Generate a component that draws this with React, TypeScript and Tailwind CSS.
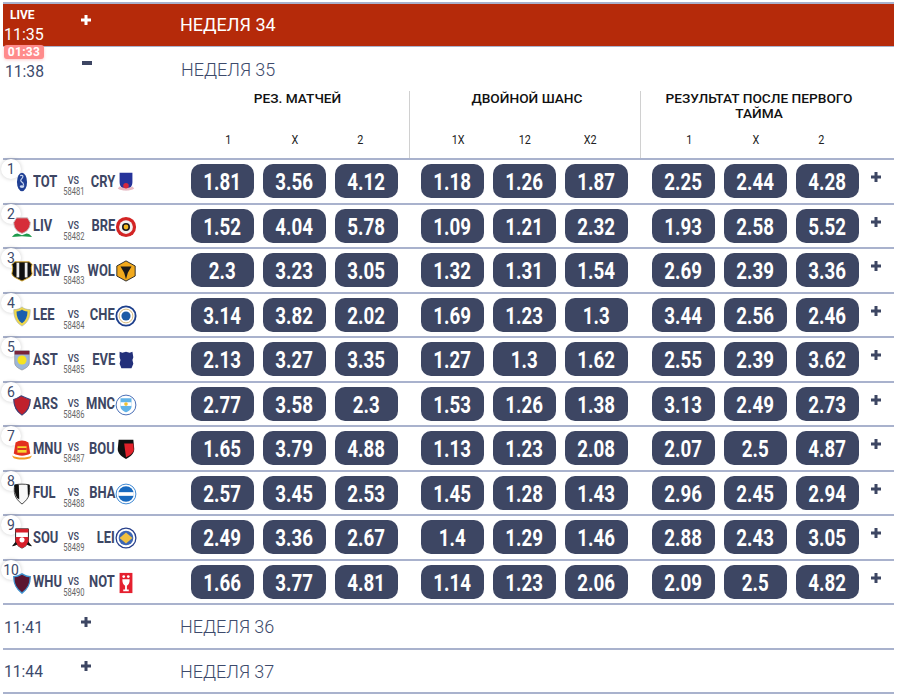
import React from "react";

const C = ({ children }: { children: React.ReactNode }) => (
  <svg viewBox="0 0 24 24" className="w-[22px] h-[22px] shrink-0">{children}</svg>
);

const crests: Record<string, React.ReactNode> = {
  TOT: <C><ellipse cx="12" cy="12" rx="5.5" ry="10" fill="#1f3f94" /><path d="M10 5c3-1 4 1 2 3s-2 3 1 5l1 3" stroke="#c9d6ee" strokeWidth="1.3" fill="none" /><ellipse cx="12" cy="17" rx="2.5" ry="1.5" fill="#c9d6ee" /></C>,
  CRY: <C><path d="M5 2h14v10c0 5-3 7-7 9-4-2-7-4-7-9z" fill="#26339a" /><path d="M3 19c4 3 14 3 18 0l-2-2c-3 2-11 2-14 0z" fill="#e8b8c0" /><circle cx="12" cy="16" r="3" fill="#d8283c" /></C>,
  LIV: <C><path d="M6 2h12l3 5c0 7-4 10-9 12C7 17 3 14 3 7z" fill="#d62e3a" stroke="#c5c5c5" strokeWidth="1" /><path d="M1 23c2-3 4-4 6-4l5 2 5-2c2 0 4 1 6 4l-11-1z" fill="#1d9a4c" /></C>,
  BRE: <C><circle cx="12" cy="12" r="11" fill="#d32424" /><circle cx="12" cy="12" r="7.500" fill="#f2f2f2" /><circle cx="12" cy="12" r="4.400" fill="#1a1a1a" /><circle cx="12" cy="12" r="2.600" fill="#f2b71f" /></C>,
  NEW: <C><path d="M4 2h16l3 3c-2 4 0 8 0 10-1 4-6 5-11 8-5-3-10-4-11-8 0-2 2-6 0-10z" fill="#111" stroke="#d9a520" strokeWidth="1" /><rect x="6" y="3" width="3" height="16" fill="#eee" /><rect x="15" y="3" width="3" height="16" fill="#eee" /></C>,
  WOL: <C><path d="M12 1l10 5.500v11L12 23 2 17.500v-11z" fill="#f1a91d" stroke="#222" strokeWidth="1" /><path d="M6 7h12l-4 7-2 7-2-7z" fill="#1a1a1a" /></C>,
  LEE: <C><path d="M3 5c4 0 7-1 9-3 2 2 5 3 9 3 0 8-2 14-9 18C5 19 3 13 3 5z" fill="#f0d84a" stroke="#9ab" strokeWidth=".6" /><path d="M6 7c3 0 5-1 6-2 1 1 3 2 6 2 0 6-2 10-6 13-4-3-6-7-6-13z" fill="#1a5fae" /></C>,
  CHE: <C><circle cx="12" cy="12" r="10.500" fill="#fff" stroke="#1d3f8c" strokeWidth="2" /><circle cx="12" cy="12" r="7.500" fill="#fff" stroke="#c9a24d" strokeWidth=".8" /><circle cx="12" cy="12" r="5" fill="#1c5aa6" /></C>,
  AST: <C><path d="M4 2h16v13c0 4-4 6-8 8-4-2-8-4-8-8z" fill="#9cb6d8" stroke="#888" strokeWidth=".6" /><path d="M4 2h16v4H4z" fill="#7a2339" /><circle cx="12" cy="12" r="5" fill="#f6e31f" /></C>,
  EVE: <C><path d="M5 3l3 1 4-1 4 1 3-1 1 6-1 3 1 4-2 5H7l-2-5 1-4-1-3z" fill="#23307a" /></C>,
  ARS: <C><path d="M3 6c3-1 5-2 8-4 4 2 7 3 10 4 0 8-3 13-9 17C6 19 3 14 3 6z" fill="#c0202c" stroke="#38407a" strokeWidth="1.200" /></C>,
  MNC: <C><circle cx="12" cy="12" r="10.800" fill="#fff" stroke="#3a62b0" strokeWidth="1" /><path d="M6 4.500h12v9c0 3-3 5-6 6.500-3-1.500-6-3.500-6-6.500z" fill="#62b4e8" /><rect x="6" y="9" width="12" height="4" fill="#fff" /><circle cx="12" cy="11" r="2" fill="#f2c230" /></C>,
  MNU: <C><path d="M5 5c4-3 10-3 14 0l2 12c-5 3-13 3-18 0z" fill="#e3301f" /><rect x="7" y="9" width="10" height="7" fill="#f7d52e" /><rect x="7" y="11" width="10" height="2" fill="#d62a1f" /><path d="M1 19c6 3 16 3 22 0l-2 3c-5 2-13 2-18 0z" fill="#f39a1f" /></C>,
  BOU: <C><path d="M4 2h16l1 10c0 5-4 8-9 11-5-3-9-6-9-11z" fill="#111" /><path d="M10 6h10l.5 7c-.5 3-4 6-8.500 8z" fill="#e2222a" /></C>,
  FUL: <C><path d="M4 2c5-1 11-1 16 0 1 8 1 14-8 21C3 16 3 10 4 2z" fill="#f8f8f8" stroke="#222" strokeWidth=".9" /><path d="M4 2c2-.4 3-.5 4.500-.5L9 18l-2.500-2C4 12 3.500 8 4 2z" fill="#111" /><path d="M18 2l2 .2c.5 5 .5 9-1.500 13z" fill="#111" /></C>,
  BHA: <C><circle cx="12" cy="12" r="10.800" fill="#fff" stroke="#2f7fd0" strokeWidth="1" /><circle cx="12" cy="12" r="8.500" fill="#1769bf" /><rect x="3.500" y="10" width="17" height="4" fill="#fff" /></C>,
  SOU: <C><path d="M5 2h14v13c0 4-3 6-7 8-4-2-7-4-7-8z" fill="#fff" stroke="#111" strokeWidth="1" /><path d="M5 2h14v4H5z" fill="#d81f2a" /><path d="M5 11h14v4c0 4-3 6-7 8-4-2-7-4-7-8z" fill="#d81f2a" /><circle cx="12" cy="14" r="2.800" fill="#fff" /><path d="M1 21c3 0 5-2 6-2l-2-3zM23 21c-3 0-5-2-6-2l2-3z" fill="#111" /></C>,
  LEI: <C><circle cx="12" cy="12" r="10.800" fill="#fff" stroke="#27408b" strokeWidth="1.400" /><circle cx="12" cy="12" r="8" fill="#3c66b5" /><path d="M12 6l7 6-7 6-7-6z" fill="#f0c040" /></C>,
  WHU: <C><path d="M3 5c3 0 6-1 9-3 3 2 6 3 9 3 0 8-2 13-9 18C5 18 3 13 3 5z" fill="#5b1530" stroke="#3f93d0" strokeWidth="1.500" /></C>,
  NOT: <C><rect x="5" y="1" width="14" height="22" fill="#e5202f" /><circle cx="9.500" cy="5" r="1.500" fill="#fff" /><circle cx="14.500" cy="5" r="1.500" fill="#fff" /><path d="M8 8h8c0 4-1 6-3 7v4h2v2H9v-2h2v-4c-2-1-3-3-3-7z" fill="#fff" /></C>,
};

const rows = [
  ["TOT", "CRY", "58481", "1.81", "3.56", "4.12", "1.18", "1.26", "1.87", "2.25", "2.44", "4.28"],
  ["LIV", "BRE", "58482", "1.52", "4.04", "5.78", "1.09", "1.21", "2.32", "1.93", "2.58", "5.52"],
  ["NEW", "WOL", "58483", "2.3", "3.23", "3.05", "1.32", "1.31", "1.54", "2.69", "2.39", "3.36"],
  ["LEE", "CHE", "58484", "3.14", "3.82", "2.02", "1.69", "1.23", "1.3", "3.44", "2.56", "2.46"],
  ["AST", "EVE", "58485", "2.13", "3.27", "3.35", "1.27", "1.3", "1.62", "2.55", "2.39", "3.62"],
  ["ARS", "MNC", "58486", "2.77", "3.58", "2.3", "1.53", "1.26", "1.38", "3.13", "2.49", "2.73"],
  ["MNU", "BOU", "58487", "1.65", "3.79", "4.88", "1.13", "1.23", "2.08", "2.07", "2.5", "4.87"],
  ["FUL", "BHA", "58488", "2.57", "3.45", "2.53", "1.45", "1.28", "1.43", "2.96", "2.45", "2.94"],
  ["SOU", "LEI", "58489", "2.49", "3.36", "2.67", "1.4", "1.29", "1.46", "2.88", "2.43", "3.05"],
  ["WHU", "NOT", "58490", "1.66", "3.77", "4.81", "1.14", "1.23", "2.06", "2.09", "2.5", "4.82"],
];

const Plus = ({ white }: { white?: boolean }) => (
  <svg viewBox="0 0 12 12" className="w-[12px] h-[12px]">
    <path d="M4.500 1h3v3.500H11v3H7.500V11h-3V7.500H1v-3h3.500z" fill={white ? "#fff" : "#3d4663"} />
  </svg>
);

const Odd = ({ v }: { v: string }) => (
  <div className="w-[63px] h-[34px] rounded-[10px] bg-[#3d4663] flex items-center justify-center text-white text-[24px] font-bold leading-none">
    <span className="inline-block scale-x-[0.78] whitespace-nowrap translate-y-[1px]">{v}</span>
  </div>
);

const Labels = ({ l, wide }: { l: string[]; wide?: boolean }) => (
  <div className={`flex justify-center gap-[3px] w-[207px] text-[12px] leading-[15px] text-[#222] translate-y-[1px] ${wide ? "ml-[11px]" : ""}`}>
    {l.map((x) => (
      <div key={x} className="w-[63px] text-center">
        <span className="inline-block scale-x-[0.9]">{x}</span>
      </div>
    ))}
  </div>
);

const Week = ({ time, title }: { time: string; title: string }) => (
  <div className="h-[44.5px] border-b-2 border-[#a9b2cd] flex items-center text-[#3d4a6b]">
    <div className="w-[77px] pl-[1px] text-[17px] leading-none translate-y-[1px]">
      <span className="inline-block origin-left scale-x-[0.92]">{time}</span>
    </div>
    <div className="w-[100px] -mt-[9px] flex"><Plus /></div>
    <div className="text-[18px] font-light leading-none translate-y-[1px]">{title}</div>
  </div>
);

export default function App() {
  return (
    <div className="w-[897px] h-[695px] bg-white overflow-hidden px-[3px] pt-[2px] [font-family:Roboto,sans-serif]">
      <div className="relative border-t-2 border-[#a9b2cd]">
        <div className="h-[43px] bg-[#b52a0a] border-b-[1.500px] border-[#a9b2cd] flex items-center text-white">
          <div className="w-[77px] pl-[1px] flex flex-col items-start">
            <div className="pl-[6px] text-[12px] font-bold leading-none pt-[1px]">LIVE</div>
            <div className="text-[17px] leading-none mt-[5px]">
              <span className="inline-block origin-left scale-x-[0.94]">11:35</span>
            </div>
          </div>
          <div className="w-[100px] -mt-[10px] flex"><Plus white /></div>
          <div className="text-[18px] leading-none">НЕДЕЛЯ 34</div>
        </div>
        <div className="absolute left-[1px] top-[41px] w-[40px] h-[14px] rounded-[3px] bg-[#ff8b8b] text-white text-[12px] font-bold leading-[14px] text-center tracking-[0.3px] shadow-[0_1px_3px_rgba(255,120,120,0.4)]">
          01:33
        </div>
      </div>

      <div className="h-[44px] flex items-center text-[#3d4a6b]">
        <div className="w-[79px] pl-[2px] text-[17px] leading-none translate-y-[2px]">
          <span className="inline-block origin-left scale-x-[0.92]">11:38</span>
        </div>
        <div className="w-[99px] -mt-[12px] flex"><div className="w-[10px] h-[4px] bg-[#3d4663]" /></div>
        <div className="text-[18px] font-light leading-none translate-y-[1px]">НЕДЕЛЯ 35</div>
      </div>

      <div className="h-[69px] border-b-2 border-[#a9b2cd] flex">
        <div className="w-[188px] shrink-0" />
        <div className="w-[219px] shrink-0 border-r border-[#d0d0d0] flex flex-col justify-between pb-[11px]">
          <div className="w-[213px] text-center text-[13.7px] font-medium leading-[15px] text-[#111]">РЕЗ. МАТЧЕЙ</div>
          <Labels l={["1", "X", "2"]} />
        </div>
        <div className="w-[231px] shrink-0 border-r border-[#d0d0d0] flex flex-col justify-between pb-[11px]">
          <div className="ml-[11px] w-[212px] text-center text-[13.7px] font-medium leading-[15px] text-[#111]">ДВОЙНОЙ ШАНС</div>
          <Labels l={["1X", "12", "X2"]} wide />
        </div>
        <div className="flex-1 flex flex-col justify-between pb-[11px]">
          <div className="ml-[11px] w-[214px] text-center text-[13.7px] font-medium leading-[15px] text-[#111]">РЕЗУЛЬТАТ ПОСЛЕ ПЕРВОГО ТАЙМА</div>
          <Labels l={["1", "X", "2"]} wide />
        </div>
      </div>

      {rows.map((r, i) => (
        <div key={r[0]} className="relative h-[44.500px] border-b-2 border-[#a9b2cd] flex items-center">
          <div className="absolute -left-[2px] -top-[1px] w-[20px] h-[20px] rounded-full bg-white shadow-[0_0_4px_rgba(0,0,0,0.2)] flex items-center justify-center text-[14px] leading-none text-[#3d4a6b]">
            {i + 1}
          </div>
          <div className="w-[188px] shrink-0 flex items-center text-[#3d4663]">
            <div className="w-[8px] shrink-0" />
            <div className="w-[22px] shrink-0 flex justify-center translate-y-[1px]">{crests[r[0]]}</div>
            <div className="w-[28px] shrink-0 text-[17px] font-bold leading-none whitespace-nowrap">
              <span className="inline-block origin-left scale-x-[0.76]">{r[0]}</span>
            </div>
            <div className="w-[25px] shrink-0 flex flex-col items-center translate-y-[5px]">
              <span className="text-[10px] font-medium leading-[11px] scale-x-[0.9]">VS</span>
              <span className="text-[10.500px] text-[#666] leading-[11px] scale-x-[0.72]">{r[2]}</span>
            </div>
            <div className="w-[29px] shrink-0 flex justify-end text-[17px] font-bold leading-none whitespace-nowrap">
              <span className="inline-block shrink-0 origin-right scale-x-[0.76]">{r[1]}</span>
            </div>
            <div className="w-[22px] shrink-0 flex justify-center translate-y-[1px]">{crests[r[1]]}</div>
          </div>
          <div className="flex gap-[9px]">
            {r.slice(3, 6).map((v, j) => <Odd key={j} v={v} />)}
          </div>
          <div className="flex gap-[9px] ml-[23px]">
            {r.slice(6, 9).map((v, j) => <Odd key={j} v={v} />)}
          </div>
          <div className="flex gap-[9px] ml-[24px]">
            {r.slice(9, 12).map((v, j) => <Odd key={j} v={v} />)}
          </div>
          <div className="ml-[11px] -mt-[8px]"><Plus /></div>
        </div>
      ))}

      <Week time="11:41" title="НЕДЕЛЯ 36" />
      <Week time="11:44" title="НЕДЕЛЯ 37" />
    </div>
  );
}
